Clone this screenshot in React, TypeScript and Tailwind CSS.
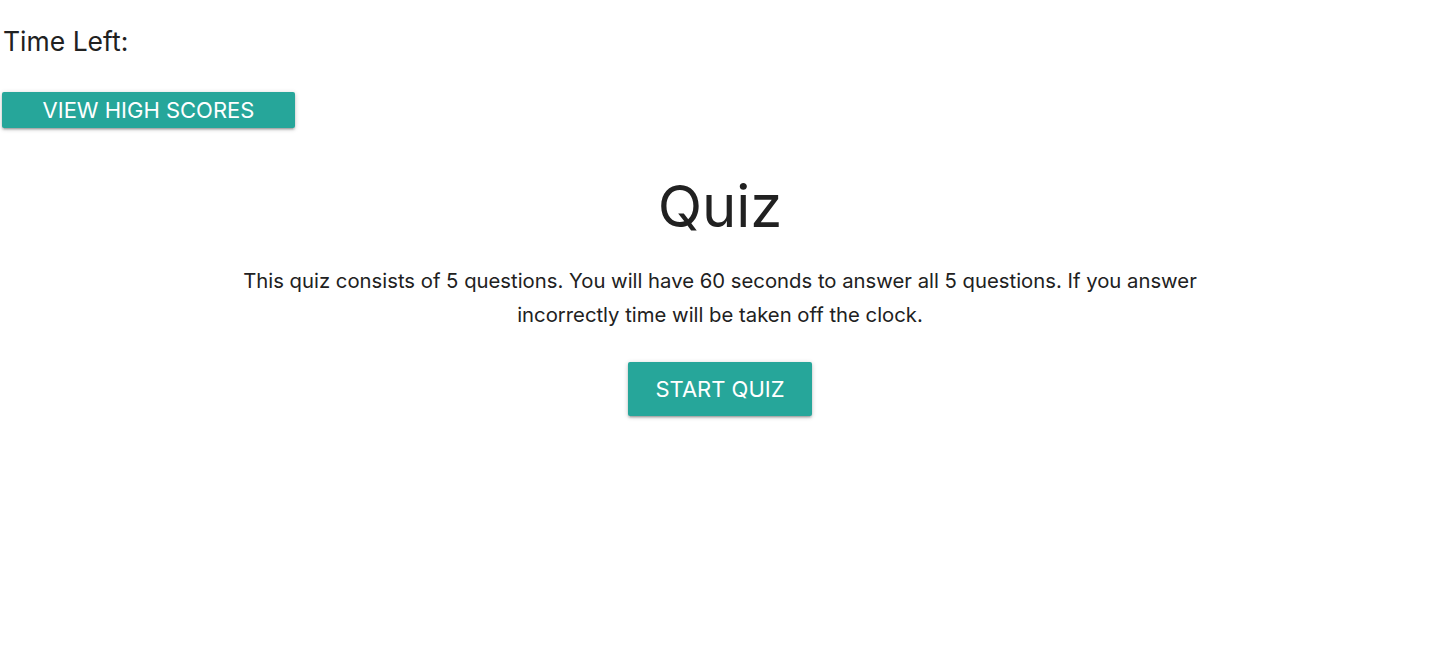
export default function App() {
  return (
    <div className="min-h-screen bg-white text-[#212121]" style={{ fontFamily: "Inter, 'Noto Sans', sans-serif" }}>
      <header className="flex flex-col items-start">
        <p className="mt-[23px] pl-[3px] text-[26.5px] leading-[36px]">Time Left:</p>
        <button className="mt-[33px] ml-[2px] h-[36px] w-[293px] rounded-[2px] bg-[#26a69a] text-[22px] uppercase text-white shadow-[0_2px_2px_0_rgba(0,0,0,0.14),0_3px_1px_-2px_rgba(0,0,0,0.12),0_1px_5px_0_rgba(0,0,0,0.2)]">
          View High Scores
        </button>
      </header>

      <main className="flex flex-col items-center text-center">
        <h1 className="mt-[38px] text-[58px] leading-[80px]">Quiz</h1>
        <p className="mt-[18px] max-w-[980px] text-[20.3px] leading-[34px]">
          This quiz consists of 5 questions. You will have 60 seconds to answer all 5 questions. If you answer incorrectly time will be taken off the clock.
        </p>
        <button className="mt-[30px] h-[54px] w-[184px] rounded-[2px] bg-[#26a69a] text-[22px] uppercase text-white shadow-[0_2px_2px_0_rgba(0,0,0,0.14),0_3px_1px_-2px_rgba(0,0,0,0.12),0_1px_5px_0_rgba(0,0,0,0.2)]">
          Start Quiz
        </button>
      </main>
    </div>
  );
}
